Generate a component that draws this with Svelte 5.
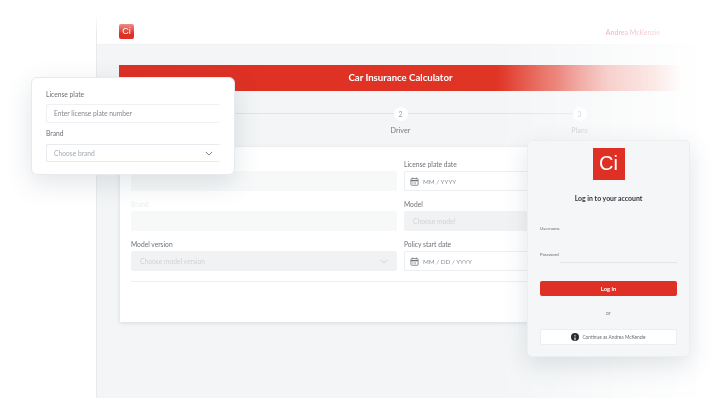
<script>
	const steps = [
		{ n: 1, label: 'Vehicle', cls: 'first' },
		{ n: 2, label: 'Driver', cls: 'second' },
		{ n: 3, label: 'Plans', cls: 'third' }
	];
</script>

{#snippet calendar()}
	<svg class="cal" viewBox="0 0 10 10" width="9" height="9" aria-hidden="true">
		<rect x="1" y="1.8" width="8" height="7.4" rx="0.8" fill="none" stroke="#70757c" stroke-width="0.9" />
		<path d="M1 4h8" stroke="#70757c" stroke-width="1.4" />
		<path d="M3 .6v2M7 .6v2" stroke="#70757c" stroke-width="0.9" />
		<path d="M2.6 5.8h4.8M2.6 7.4h4.8" stroke="#70757c" stroke-width="0.7" stroke-dasharray="1 .6" />
	</svg>
{/snippet}

{#snippet chevron(color)}
	<svg class="chev" viewBox="0 0 10 6" width="8" height="5" aria-hidden="true">
		<path d="M1 1l4 4 4-4" fill="none" stroke={color} stroke-width="1.1" />
	</svg>
{/snippet}

<div class="stage">
	<div class="app">
		<header>
			<div class="logo-small">Ci</div>
			<span class="user">Andrea McKenzie</span>
		</header>
		<main>
			<div class="banner">Car Insurance Calculator</div>
			<div class="steps">
				{#each steps as s}
					<div class="step {s.cls}">
						<span class="dot">{s.n}</span>
						<span class="step-label">{s.label}</span>
					</div>
				{/each}
			</div>
			<section class="form-card">
				<div class="grid">
					<div class="field faded">
						<span class="label">License plate</span>
						<div class="input disabled wash"></div>
					</div>
					<div class="field">
						<span class="label">License plate date</span>
						<div class="input">{@render calendar()}<span class="ph date">MM / YYYY</span></div>
					</div>
					<div class="field faded">
						<span class="label">Brand</span>
						<div class="input disabled wash"></div>
					</div>
					<div class="field">
						<span class="label">Model</span>
						<div class="input disabled"><span class="ph faint">Choose model</span></div>
					</div>
					<div class="field">
						<span class="label">Model version</span>
						<div class="input disabled between">
							<span class="ph faint">Choose model version</span>
							{@render chevron('#c9ccd0')}
						</div>
					</div>
					<div class="field">
						<span class="label">Policy start date</span>
						<div class="input">{@render calendar()}<span class="ph date">MM / DD / YYYY</span></div>
					</div>
				</div>
				<hr />
			</section>
		</main>
	</div>

	<div class="popup">
		<span class="label">License plate</span>
		<div class="pop-input">Enter license plate number</div>
		<span class="label">Brand</span>
		<div class="pop-input select">
			<span>Choose brand</span>
			{@render chevron('#6d7278')}
		</div>
	</div>

	<div class="login">
		<div class="logo-big">Ci</div>
		<h2>Log in to your account</h2>
		<span class="tiny user-label">Username</span>
		<span class="tiny pass-label">Password</span>
		<div class="pass-line"></div>
		<button class="btn-login">Log in</button>
		<span class="or">or</span>
		<button class="btn-continue">
			<svg viewBox="0 0 10 10" width="8" height="8" aria-hidden="true">
				<circle cx="5" cy="5" r="5" fill="#2b2d31" />
				<circle cx="5" cy="3.5" r="1.3" fill="#8e8b86" />
				<path d="M3.8 9V6.2c0-.7.5-1 1.2-1s1.2.3 1.2 1V9z" fill="#a5a29c" />
			</svg>
			Continue as Andrea McKenzie
		</button>
	</div>
</div>

<style>
	:global(body) {
		margin: 0;
		background: #fff;
	}

	.stage {
		position: relative;
		width: 720px;
		height: 400px;
		overflow: hidden;
		background: #fff;
		font-family: Lato, 'Open Sans', sans-serif;
		filter: blur(0.3px);
	}

	.app {
		margin-left: 96px;
		height: 398px;
		border-left: 1px solid #e8eaec;
		display: flex;
		flex-direction: column;
		mask-image: linear-gradient(to right, #000 64%, transparent 98%),
			linear-gradient(to bottom, transparent 12px, #000 34px);
		mask-composite: intersect;
	}

	header {
		height: 45px;
		flex: none;
		box-sizing: border-box;
		padding: 19px 60px 0 22px;
		display: flex;
		justify-content: space-between;
		align-items: center;
		background: #fff;
		border-bottom: 1px solid #f0f1f3;
	}

	.logo-small {
		width: 15px;
		height: 15px;
		border-radius: 2px;
		background: #de3024;
		color: #fff;
		font-size: 9px;
		line-height: 15px;
		text-align: center;
		font-family: 'Liberation Sans', sans-serif;
	}

	.user {
		font-size: 7px;
		color: #dc4560;
	}

	main {
		flex: 1;
		background: #f3f5f6;
		padding: 20px 40px 0 22px;
	}

	.banner {
		height: 26px;
		line-height: 26px;
		text-align: center;
		color: #fff;
		font-size: 9.6px;
		font-weight: 700;
		margin-right: -2px;
		background: linear-gradient(
			to right,
			#de3024 0%,
			#e03425 68%,
			#e4574a 78%,
			#ed9a92 87%,
			#f0a59d 95%,
			#f6c3bd 98%,
			#fdf3f2 100%
		);
	}

	.steps {
		display: grid;
		grid-template-columns: repeat(3, 179px);
		padding: 16px 0 0 13px;
		height: 40px;
	}

	.step {
		position: relative;
		display: flex;
		flex-direction: column;
		align-items: center;
		gap: 5px;
	}

	/* connector between the dots */
	.step::before {
		content: '';
		position: absolute;
		top: 6px;
		left: 0;
		right: 0;
		height: 1px;
		background: #dfe2e6;
	}

	.step.first::before {
		left: 50%;
	}

	.step.third::before {
		right: 50%;
	}

	.dot {
		position: relative;
		width: 14px;
		height: 14px;
		border-radius: 50%;
		background: #fff;
		color: #9a9ea4;
		font-size: 7px;
		line-height: 14px;
		text-align: center;
	}

	.step-label {
		font-size: 7.2px;
		line-height: 10px;
		color: #777c83;
	}

	.third .step-label,
	.third .dot {
		color: #b9bdc2;
	}

	.form-card {
		height: 175px;
		box-sizing: border-box;
		background: #fff;
		padding: 12px 10px 0 11px;
		margin-left: 1px;
		box-shadow: 0 1px 4px rgba(70, 80, 95, 0.16);
	}

	.grid {
		display: grid;
		grid-template-columns: 1fr 1fr;
		column-gap: 7px;
		row-gap: 8px;
	}

	.field {
		display: flex;
		flex-direction: column;
	}

	.label {
		font-size: 6.7px;
		line-height: 10px;
		height: 12px;
		color: #6d7278;
		display: block;
	}

	.faded .label {
		color: #eceef0;
	}

	.input {
		height: 20px;
		box-sizing: border-box;
		border: 1px solid #eceef1;
		border-radius: 2px;
		display: flex;
		align-items: center;
		gap: 4px;
		padding: 0 8px 0 5px;
		background: #fff;
	}

	.input.disabled {
		background: #f1f2f3;
		border-color: #f1f2f3;
		padding-left: 8px;
	}

	.input.wash {
		background: #f7f9f9;
		border-color: #f7f9f9;
	}

	.between {
		justify-content: space-between;
	}

	.ph {
		font-size: 6.7px;
		color: #8b9096;
	}

	.ph.date {
		font-size: 6.3px;
	}

	.ph.faint {
		color: #d0d3d6;
	}

	hr {
		border: none;
		border-top: 1px solid #eceef0;
		margin: 10px 0 0;
	}

	.popup {
		position: absolute;
		left: 31px;
		top: 77px;
		width: 204px;
		height: 98px;
		box-sizing: border-box;
		padding: 11px 14px 0 14px;
		background: #fff;
		border-radius: 6px;
		border: 1px solid #e6e9ed;
		box-shadow: 0 8px 26px rgba(70, 85, 105, 0.16);
	}

	.pop-input {
		height: 19px;
		box-sizing: border-box;
		border: 1px solid #eef0f3;
		border-right: none;
		border-radius: 2px;
		padding: 0 7px;
		margin: 3px 0 5px;
		font-size: 6.7px;
		line-height: 17px;
		color: #83888e;
	}

	.select {
		border-color: #e8ebef;
		color: #a6aab0;
		display: flex;
		justify-content: space-between;
		align-items: center;
		padding-right: 7px;
		height: 18px;
		margin-top: 4px;
	}

	.login {
		position: absolute;
		left: 527px;
		top: 140px;
		width: 163px;
		height: 217px;
		box-sizing: border-box;
		padding: 7px 12px 0;
		background: #f5f6f7;
		border: 1px solid #eceef0;
		border-radius: 5px;
		box-shadow: 0 8px 24px rgba(70, 85, 105, 0.16);
		display: flex;
		flex-direction: column;
		align-items: center;
	}

	.logo-big {
		width: 32px;
		height: 32px;
		background: #de3024;
		color: #fff;
		font-family: 'Liberation Sans', sans-serif;
		font-size: 20px;
		line-height: 31px;
		text-align: center;
	}

	h2 {
		margin: 13px 0 0;
		font-size: 6.9px;
		line-height: 10px;
		font-weight: 700;
		color: #33373c;
	}

	.tiny {
		align-self: flex-start;
		font-size: 4.5px;
		line-height: 6px;
		color: #6c7076;
	}

	.user-label {
		margin-top: 23px;
	}

	.pass-label {
		margin-top: 20px;
	}

	.pass-line {
		align-self: stretch;
		margin: 4px 0 0 20px;
		border-top: 1px solid #e3e5e8;
	}

	button {
		align-self: stretch;
		font-family: inherit;
		border-radius: 2px;
		padding: 0;
		cursor: pointer;
	}

	.btn-login {
		height: 15px;
		margin-top: 18px;
		border: none;
		background: #de3024;
		color: #fff;
		font-size: 5.8px;
		font-weight: 700;
	}

	.or {
		margin-top: 13px;
		font-size: 5.2px;
		line-height: 8px;
		color: #777b80;
	}

	.btn-continue {
		height: 16px;
		margin-top: 12px;
		border: 1px solid #eceef0;
		background: #fff;
		color: #6a6e74;
		font-size: 4.8px;
		display: flex;
		align-items: center;
		justify-content: center;
		gap: 3px;
	}
</style>
